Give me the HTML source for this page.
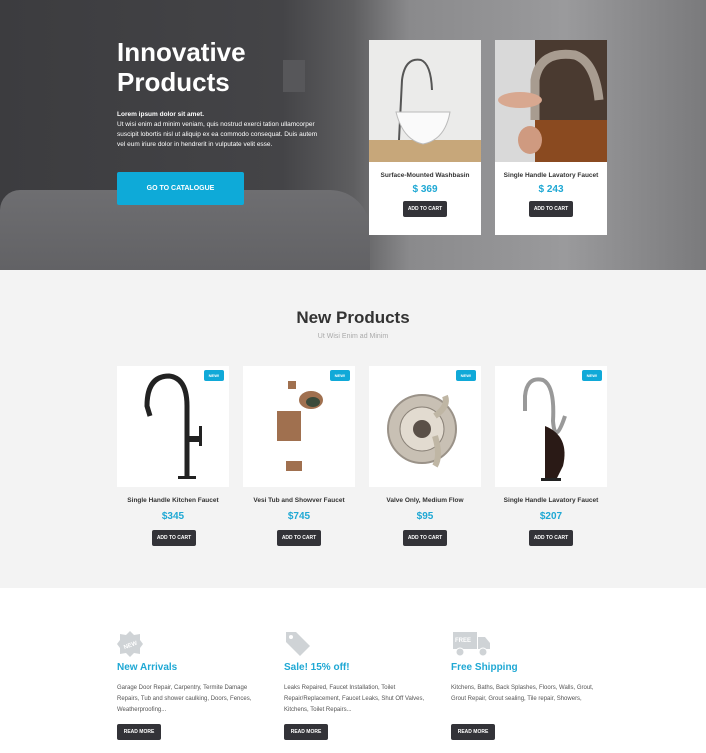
<!DOCTYPE html>
<html><head><meta charset="utf-8"><style>
*{margin:0;padding:0;box-sizing:border-box}
body{width:706px;height:753px;overflow:hidden;font-family:"Liberation Sans",sans-serif;background:#fff;position:relative}
.abs{position:absolute}
.hero{left:0;top:0;width:706px;height:270px;background:linear-gradient(90deg,#3c3c3f 0%,#444447 40%,#5e5e60 50%,#8a8a8c 58%,#9a9a9c 80%,#7a7a7c 100%)}
.tub{left:0;top:190px;width:370px;height:80px;background:linear-gradient(180deg,#6e6e71,#626265);border-radius:20px 40px 0 0}
.btn{background:#333338;color:#fff;font-size:5px;font-weight:bold;text-align:center;border-radius:2px;line-height:16px}
.card{background:#fff}
.pname{font-size:6.5px;color:#333;text-align:center;font-weight:bold}
.price{color:#1fa8d4;font-weight:bold;text-align:center}
.new{background:#10a9d8;color:#fff;font-size:4px;font-weight:bold;width:20px;height:11px;line-height:11px;text-align:center;border-radius:2px}
.ft{color:#1fa8d4;font-weight:bold;font-size:10px}
.fx{color:#555;font-size:6px;line-height:11px}
</style></head><body>
<div class="abs hero"></div>
<div class="abs tub"></div>
<div class="abs" style="left:283px;top:60px;width:22px;height:32px;background:#57575a"></div>
<div class="abs" style="left:117px;top:37px;color:#fff;font-size:26px;font-weight:bold;line-height:30px">Innovative<br>Products</div>
<div class="abs" style="left:117px;top:110px;color:#fff;font-size:6.5px;line-height:10px;width:210px"><b>Lorem ipsum dolor sit amet.</b><br>Ut wisi enim ad minim veniam, quis nostrud exerci tation ullamcorper suscipit lobortis nisl ut aliquip ex ea commodo consequat. Duis autem vel eum iriure dolor in hendrerit in vulputate velit esse.</div>
<div class="abs" style="left:117px;top:172px;width:127px;height:33px;background:#0eaad8;border-radius:2px;color:#fff;font-size:7px;font-weight:bold;text-align:center;line-height:33px">GO TO CATALOGUE</div>

<div class="abs card" style="left:369px;top:40px;width:112px;height:195px">
<svg width="112" height="122" style="display:block"><rect width="112" height="122" fill="#ebebea"/><rect y="100" width="112" height="22" fill="#c7a77a"/><path d="M30 100 L33 40 Q36 17 52 20 Q62 24 63 50" stroke="#555" stroke-width="2" fill="none"/><path d="M27 72 L81 72 Q76 100 54 104 Q34 100 27 72Z" fill="#fafafa" stroke="#bbb"/></svg>
<div class="pname" style="margin-top:10px">Surface-Mounted Washbasin</div>
<div class="price" style="font-size:10px;margin-top:5px">$ 369</div>
<div class="btn" style="width:44px;margin:6px auto 0">ADD TO CART</div></div>
<div class="abs card" style="left:495px;top:40px;width:112px;height:195px">
<svg width="112" height="122" style="display:block"><rect width="112" height="122" fill="#4a3a30"/><rect width="40" height="122" fill="#d9d9d9"/><rect x="40" y="80" width="72" height="42" fill="#8a4a20"/><path d="M40 80 L40 40 Q45 10 80 15 Q100 22 104 60" stroke="#a89c90" stroke-width="9" fill="none"/><ellipse cx="25" cy="60" rx="22" ry="8" fill="#d8a890"/><ellipse cx="35" cy="100" rx="12" ry="14" fill="#cf9a80"/></svg>
<div class="pname" style="margin-top:10px">Single Handle Lavatory Faucet</div>
<div class="price" style="font-size:10px;margin-top:5px">$ 243</div>
<div class="btn" style="width:44px;margin:6px auto 0">ADD TO CART</div></div>

<div class="abs" style="left:0;top:270px;width:706px;height:318px;background:#f3f3f3"></div>
<div class="abs" style="left:0;top:308px;width:706px;text-align:center;font-size:17px;font-weight:bold;color:#333">New Products</div>
<div class="abs" style="left:0;top:333px;width:706px;text-align:center;font-size:7px;color:#aaa">Ut Wisi Enim ad Minim</div>

<div class="abs card" style="left:117px;top:366px;width:112px;height:121px"><svg width="112" height="121"><path d="M33 50 L30 40 Q30 10 52 10 Q70 12 70 40 L70 110" stroke="#222" stroke-width="5" fill="none"/><rect x="61" y="110" width="18" height="3" fill="#222"/><rect x="70" y="70" width="15" height="6" fill="#222"/><rect x="82" y="60" width="3" height="20" fill="#222"/></svg></div>
<div class="abs card" style="left:243px;top:366px;width:112px;height:121px"><svg width="112" height="121"><rect x="45" y="15" width="8" height="8" fill="#a0704f"/><ellipse cx="68" cy="34" rx="12" ry="9" fill="#a0704f"/><ellipse cx="70" cy="36" rx="7" ry="5" fill="#3a4a3a"/><rect x="34" y="45" width="24" height="30" fill="#a0704f"/><rect x="43" y="95" width="16" height="10" fill="#a0704f"/></svg></div>
<div class="abs card" style="left:369px;top:366px;width:112px;height:121px"><svg width="112" height="121"><circle cx="53" cy="63" r="34" fill="#c8c0b4" stroke="#9a9288" stroke-width="2"/><circle cx="53" cy="63" r="22" fill="#e2dbd0" stroke="#8a8278"/><circle cx="53" cy="63" r="9" fill="#5a5048"/><path d="M66 50 Q80 40 76 30 M66 70 Q72 90 66 100" stroke="#bfb6a4" stroke-width="6" fill="none"/></svg></div>
<div class="abs card" style="left:495px;top:366px;width:112px;height:121px"><svg width="112" height="121"><path d="M30 45 L30 30 Q32 10 48 14 Q60 20 58 55 Q60 80 70 50" stroke="#999" stroke-width="4" fill="none"/><path d="M50 60 Q75 70 68 100 L62 112 L50 112Z" fill="#2a1a16"/><rect x="46" y="112" width="20" height="3" fill="#222"/></svg></div>
<div class="abs new" style="left:204px;top:370px">NEW!</div>
<div class="abs new" style="left:330px;top:370px">NEW!</div>
<div class="abs new" style="left:456px;top:370px">NEW!</div>
<div class="abs new" style="left:582px;top:370px">NEW!</div>

<div class="abs pname" style="left:117px;top:497px;width:112px">Single Handle Kitchen Faucet</div>
<div class="abs pname" style="left:243px;top:497px;width:112px">Vesi Tub and Showver Faucet</div>
<div class="abs pname" style="left:369px;top:497px;width:112px">Valve Only, Medium Flow</div>
<div class="abs pname" style="left:495px;top:497px;width:112px">Single Handle Lavatory Faucet</div>
<div class="abs price" style="left:117px;top:511px;width:112px;font-size:10px">$345</div>
<div class="abs price" style="left:243px;top:511px;width:112px;font-size:10px">$745</div>
<div class="abs price" style="left:369px;top:511px;width:112px;font-size:10px">$95</div>
<div class="abs price" style="left:495px;top:511px;width:112px;font-size:10px">$207</div>
<div class="abs btn" style="left:152px;top:530px;width:44px">ADD TO CART</div>
<div class="abs btn" style="left:277px;top:530px;width:44px">ADD TO CART</div>
<div class="abs btn" style="left:403px;top:530px;width:44px">ADD TO CART</div>
<div class="abs btn" style="left:529px;top:530px;width:44px">ADD TO CART</div>

<svg class="abs" style="left:116px;top:630px" width="28" height="28"><polygon points="14,1 18,5 24,4 24,10 27,14 24,18 24,24 18,23 14,27 10,23 4,24 4,18 1,14 4,10 4,4 10,5" fill="#cfd3d6"/><text x="7" y="17" font-size="6" fill="#fff" font-family="Liberation Sans" font-weight="bold" transform="rotate(-20 14 14)">NEW</text></svg>
<svg class="abs" style="left:284px;top:630px" width="28" height="28"><path d="M2 2 L12 2 L26 16 L16 26 L2 12Z" fill="#cfd3d6"/><circle cx="7" cy="7" r="2" fill="#fff"/></svg>
<svg class="abs" style="left:452px;top:630px" width="40" height="28"><rect x="1" y="2" width="24" height="17" fill="#cfd3d6"/><path d="M26 7 L33 7 L38 13 L38 19 L26 19Z" fill="#cfd3d6"/><circle cx="8" cy="22" r="4" fill="#cfd3d6" stroke="#fff"/><circle cx="31" cy="22" r="4" fill="#cfd3d6" stroke="#fff"/><text x="3" y="12" font-size="6" fill="#fff" font-family="Liberation Sans" font-weight="bold">FREE</text></svg>

<div class="abs ft" style="left:117px;top:662px">New Arrivals</div>
<div class="abs ft" style="left:284px;top:662px">Sale! 15% off!</div>
<div class="abs ft" style="left:451px;top:662px">Free Shipping</div>
<div class="abs fx" style="left:117px;top:683px;width:150px">Garage Door Repair, Carpentry, Termite Damage Repairs, Tub and shower caulking, Doors, Fences, Weatherproofing...</div>
<div class="abs fx" style="left:284px;top:683px;width:150px">Leaks Repaired, Faucet Installation, Toilet Repair/Replacement, Faucet Leaks, Shut Off Valves, Kitchens, Toilet Repairs...</div>
<div class="abs fx" style="left:451px;top:683px;width:150px">Kitchens, Baths, Back Splashes, Floors, Walls, Grout, Grout Repair, Grout sealing, Tile repair, Showers,</div>
<div class="abs btn" style="left:117px;top:724px;width:44px">READ MORE</div>
<div class="abs btn" style="left:284px;top:724px;width:44px">READ MORE</div>
<div class="abs btn" style="left:451px;top:724px;width:44px">READ MORE</div>
</body></html>
